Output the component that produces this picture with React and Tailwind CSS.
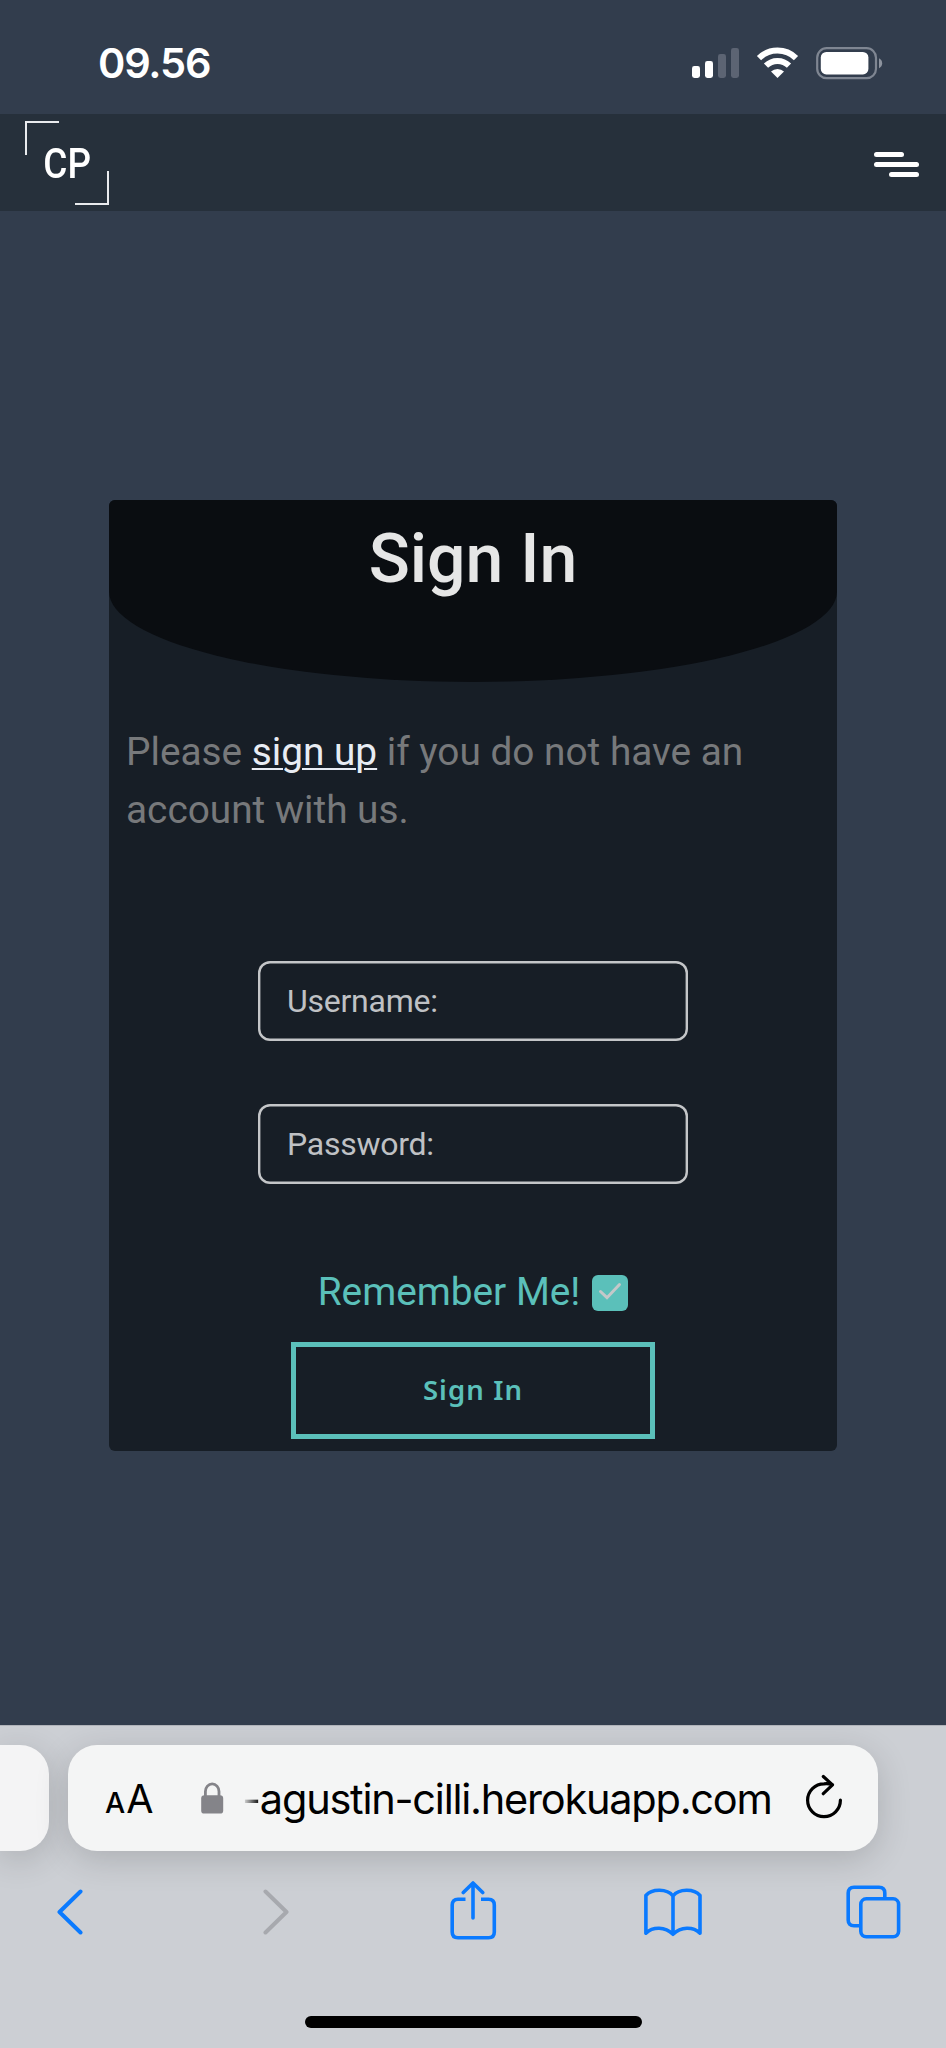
const roboto = "font-['Roboto','Liberation_Sans',sans-serif]";

function StatusBar() {
  return (
    <div className="flex h-[114px] items-center justify-between pl-[98px] pr-[63px] text-white">
      <span className="mt-[12px] font-['Inter','Liberation_Sans',sans-serif] text-[41.5px] leading-[50px] font-semibold tracking-[-1.2px]">09.56</span>
      <div className="mt-[12px] flex items-center">
        <svg className="h-[32px] w-[48px]" viewBox="0 0 48 32" fill="#fff">
          <rect x="0" y="19" width="8" height="12" rx="2.4" />
          <rect x="13" y="14" width="8" height="17" rx="2.4" />
          <rect x="26" y="7" width="8" height="24" rx="2.4" fill="#5c6473" />
          <rect x="39" y="1" width="8" height="30" rx="2.4" fill="#5c6473" />
        </svg>
        <svg className="ml-[16px] h-[32px] w-[43px]" viewBox="0 0 43 32" fill="none">
          <path d="M3 11.1A26.5 26.5 0 0 1 40 11.1" stroke="#fff" strokeWidth="6" />
          <path d="M10 18.6A16.4 16.4 0 0 1 33 18.6" stroke="#fff" strokeWidth="6" />
          <path d="M15 24.6A9.3 9.3 0 0 1 28 24.6L21.5 31Z" fill="#fff" />
        </svg>
        <svg className="ml-[17px] h-[34px] w-[67px]" viewBox="0 0 67 34" fill="none">
          <rect x="1.2" y="2.2" width="58.8" height="30" rx="9.5" stroke="#7f8692" strokeWidth="2.2" />
          <rect x="4.8" y="6" width="47.6" height="22.4" rx="5.5" fill="#fff" />
          <path d="M63 12.2q3.2 1.6 3.2 5t-3.2 5z" fill="#8d939e" />
        </svg>
      </div>
    </div>
  );
}

function SiteHeader() {
  return (
    <header className="flex h-[97px] items-center justify-between bg-[#26303b] pr-[27px] pl-[25px]">
      <div className="relative flex h-[84px] w-[84px] items-center justify-center">
        <span className="absolute top-0 left-0 h-[34px] w-[34px] border-t-2 border-l-2 border-[#e9ebee]" />
        <span className="absolute right-0 bottom-0 h-[34px] w-[34px] border-r-2 border-b-2 border-[#e9ebee]" />
        <span className={`${roboto} mt-[2px] scale-x-[0.88] text-[42px] leading-none font-medium text-white`}>CP</span>
      </div>
      <div className="mt-[4px] flex w-[45px] flex-col gap-[4.6px]">
        <span className="h-[5px] w-[30px] rounded-full bg-white" />
        <span className="h-[5px] w-[45px] rounded-full bg-white" />
        <span className="h-[5px] w-[30px] self-end rounded-full bg-white" />
      </div>
    </header>
  );
}

function Field({ label }) {
  return (
    <div className="flex h-[80px] w-[430px] shrink-0 items-center rounded-[12px] pl-[29px] text-[32px] tracking-[-0.25px] text-[#bfc1c4] shadow-[inset_0_0_0_2.4px_#c4c6c8]">
      {label}
    </div>
  );
}

function SignInCard() {
  return (
    <form className={`${roboto} flex h-[951px] w-[728px] flex-col items-center overflow-hidden rounded-[6px] bg-[#171e26]`}>
      <div className="flex h-[181.5px] w-full shrink-0 justify-center rounded-b-[50%] bg-[#0a0d11] pt-[18px]">
        <h1 className="text-[67.9px] leading-[82px] font-medium text-[#e6e6e6]">Sign In</h1>
      </div>
      <p className="mt-[41px] h-[117px] w-full pl-[17px] text-[38.8px] leading-[58.2px] tracking-[-0.01px] whitespace-nowrap text-[#77797b]">
        Please <a className="text-[#e8ecf3] underline decoration-2 underline-offset-[3px]">sign up</a> if you do not have an
        <br />
        account with us.
      </p>
      <div className="mt-[121.5px] flex flex-col gap-[63px]">
        <Field label="Username:" />
        <Field label="Password:" />
      </div>
      <label className="mt-[79px] flex h-[58px] items-center gap-[12px] text-[38.8px] text-[#5bc0ba]">
        <span className="pt-[1px]">Remember Me!</span>
        <span className="mt-[2px] flex h-[36px] w-[36px] items-center justify-center rounded-[6px] bg-[#5bc0ba]">
          <svg className="h-[36px] w-[36px]" viewBox="0 0 36 36" fill="none">
            <path d="M8.5 16.5 15 22.7 27.5 9.5" stroke="#c4c8c9" strokeWidth="3" strokeLinecap="round" strokeLinejoin="miter" />
          </svg>
        </span>
      </label>
      <button type="button" className="mt-[21px] h-[97px] w-[364px] shrink-0 border-[5px] border-[#5bc0ba] pb-[2px] font-['Noto_Sans','Open_Sans',sans-serif] text-[27.5px] font-semibold tracking-[1.1px] text-[#5bc0ba]">Sign In</button>
    </form>
  );
}

function AddressRow() {
  return (
    <div className="flex h-[106px] gap-[19.5px]">
      <div className="w-[48.5px] rounded-r-[29px] bg-[#f4f4f5] shadow-[0_8px_34px_rgba(0,0,0,0.16)]" />
      <div className="flex h-[106px] w-[810px] items-center rounded-[29px] bg-[#f4f5f5] pl-[37px] font-['Inter','Liberation_Sans',sans-serif] text-black shadow-[0_8px_34px_rgba(0,0,0,0.16)]">
        <div className="mt-[3px] flex w-[96px] items-baseline gap-[1px]">
          <span className="text-[28.5px] font-medium">A</span>
          <span className="text-[39.5px] tracking-[-1px]">A</span>
        </div>
        <svg className="h-[32px] w-[24px]" viewBox="0 0 24 32" fill="none">
          <rect x="0.2" y="13.2" width="22" height="18.4" rx="3.2" fill="#848489" />
          <path d="M4.4 14V9.5a6.8 7.6 0 0 1 13.6 0V14" stroke="#848489" strokeWidth="2.8" />
        </svg>
        <div className="mt-[1px] ml-[17px] text-[41.5px] leading-[50px] tracking-[-1.24px] whitespace-nowrap">
          <span className="bg-linear-to-r from-transparent to-black bg-clip-text text-transparent">-</span>agustin-cilli.herokuapp.com
        </div>
        <svg className="mt-[-4px] mr-[35px] ml-auto h-[46px] w-[38px] shrink-0" viewBox="0 0 38 46" fill="none" stroke="#000" strokeWidth="3.2" strokeLinecap="round" strokeLinejoin="round">
          <path d="M27 11.5C24.500 10.700 22 10.500 19 10.800A16.400 16.400 0 1 0 35.400 27.200" />
          <path d="M18.300 3.500 27.500 11.900 18.300 20.700" />
        </svg>
      </div>
    </div>
  );
}

function BrowserBar() {
  return (
    <div className="flex h-[323px] flex-col overflow-hidden border-t border-[#b0b3b9] bg-[#cccfd4] pt-[19px]">
      <AddressRow />
      <div className="mt-[27px] flex h-[68px] items-center pl-[57px]">
        <svg className="h-[46px] w-[26px]" viewBox="0 0 26 46" fill="none" stroke="#0a7aff" strokeWidth="4" strokeLinecap="round" strokeLinejoin="round"><path d="M23.5 2.5 2.5 23 23.5 43.5" /></svg>
        <svg className="ml-[180px] h-[46px] w-[26px]" viewBox="0 0 26 46" fill="none" stroke="#a7a9ae" strokeWidth="4" strokeLinecap="round" strokeLinejoin="round"><path d="M2.5 2.5 23.5 23 2.5 43.5" /></svg>
        <svg className="ml-[160px] h-[62px] w-[48px]" viewBox="0 0 48 62" fill="none" stroke="#0a7aff" strokeWidth="3.6" strokeLinecap="round" strokeLinejoin="round">
          <path d="M16.5 18.3H9Q3.2 18.3 3.2 24.1V51Q3.2 56.8 9 56.8H39.5Q45.3 56.8 45.3 51V24.1Q45.3 18.3 39.5 18.3H32" strokeLinecap="butt" />
          <path d="M24 37V3.5M14.3 11.5 24 2 33.7 11.5" />
        </svg>
        <svg className="ml-[146px] h-[50px] w-[60px]" viewBox="0 0 60 50" fill="none" stroke="#0a7aff" strokeWidth="3.6" strokeLinejoin="round" strokeLinecap="round">
          <path d="M2.9 8.5C9 1.500 24 1.500 30 9C36 1.500 51 1.500 57 8.500V46.200C50 39.500 38 39.500 30 47.300C22 39.500 10 39.500 2.900 46.200ZM30 9V47" />
        </svg>
        <svg className="ml-[141.5px] h-[56px] w-[56px]" viewBox="0 0 56 56" fill="none" stroke="#0a7aff" strokeWidth="3.6">
          <path d="M15 41.700H9Q3.200 41.700 3.200 35.900V9Q3.200 3.200 9 3.200H34Q39.800 3.200 39.800 9V14.500" />
          <rect x="15.800" y="14.800" width="37.800" height="38" rx="5.500" />
        </svg>
      </div>
      <div className="mx-auto mt-[69.5px] h-[12.5px] w-[337px] rounded-full bg-black" />
    </div>
  );
}

export default function App() {
  return (
    <div className="flex h-[2048px] w-[946px] flex-col overflow-hidden bg-[#323d4d]">
      <StatusBar />
      <SiteHeader />
      <main className="flex h-[1514px] shrink-0 justify-center pt-[289px]">
        <SignInCard />
      </main>
      <BrowserBar />
    </div>
  );
}
